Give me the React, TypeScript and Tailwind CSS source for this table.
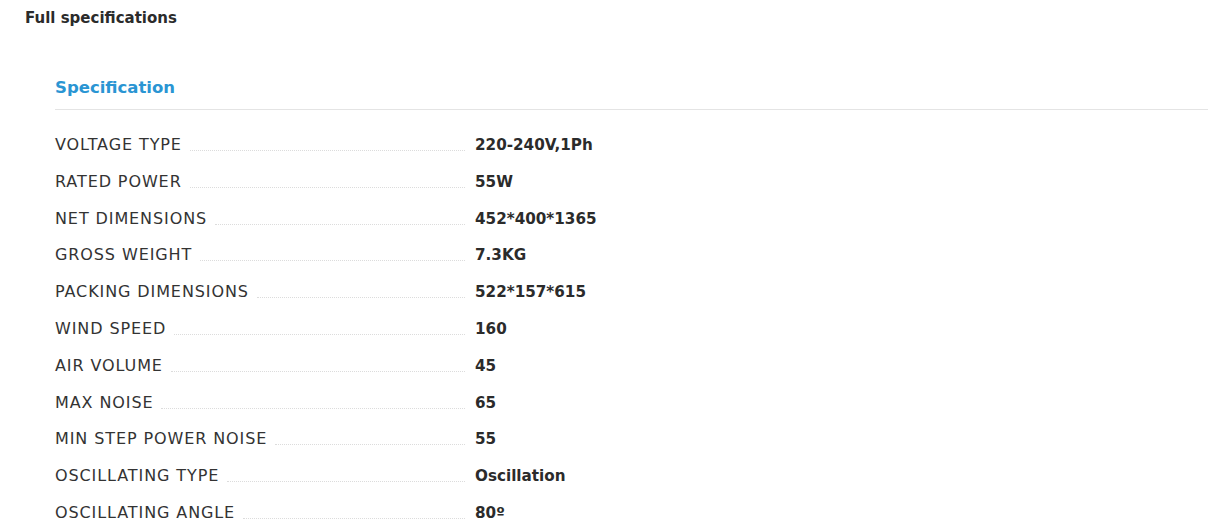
const specs: [string, string][] = [
  ["VOLTAGE TYPE", "220-240V,1Ph"],
  ["RATED POWER", "55W"],
  ["NET DIMENSIONS", "452*400*1365"],
  ["GROSS WEIGHT", "7.3KG"],
  ["PACKING DIMENSIONS", "522*157*615"],
  ["WIND SPEED", "160"],
  ["AIR VOLUME", "45"],
  ["MAX NOISE", "65"],
  ["MIN STEP POWER NOISE", "55"],
  ["OSCILLATING TYPE", "Oscillation"],
  ["OSCILLATING ANGLE", "80º"],
];

export default function App() {
  return (
    <div className="bg-white text-[#333] font-['DejaVu_Sans',sans-serif] w-[1220px] h-[532px] overflow-hidden">
      <div className="pl-[25px] pt-[7px]">
        <h2 className="text-[15px] leading-[22px] font-bold text-[#2b2b2b]">Full specifications</h2>
      </div>

      <div className="pl-[55px] pr-[12px] mt-[47px]">
        {/* section title */}
        <div className="border-b border-[#e4e4e4] pb-[9px]">
          <h3 className="text-[16.5px] leading-[24px] font-bold text-[#2a95d3]">Specification</h3>
        </div>

        <div className="pt-[23px]">
          {specs.map(([label, value]) => (
            <div key={label} className="flex items-baseline h-[36.8px]">
              <div className="w-[420px] flex items-baseline pr-[10px]">
                <span className="text-[16px] leading-[24px] tracking-[0.9px] text-[#333] whitespace-nowrap">{label}</span>
                <span className="flex-1 ml-[8px] border-b border-dotted border-[#dcdcdc] translate-y-[1px]"></span>
              </div>
              <span className="text-[15.2px] leading-[24px] font-bold text-[#2b2b2b]">{value}</span>
            </div>
          ))}
        </div>
      </div>
    </div>
  );
}
